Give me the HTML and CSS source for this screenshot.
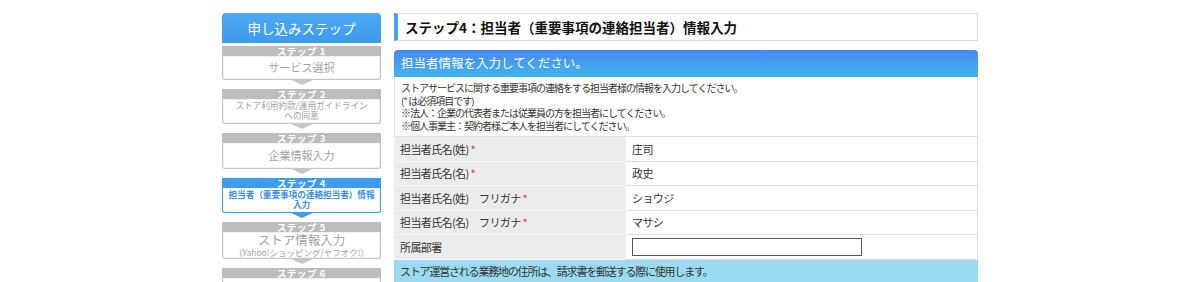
FILE: index.html
```html
<!DOCTYPE html>
<html lang="ja">
<head>
    <meta charset="UTF-8">
    <title>ステップ4：担当者情報入力</title>
    <link rel="stylesheet" href="styles.css">
</head>
<body>
    <div class="wrapper">
        <div class="sidebar">
            <div class="side-head">申し込みステップ</div>
            <div class="step">
                <div class="step-label">ステップ 1</div>
                <div class="step-box s1">サービス選択</div>
            </div>
            <div class="step">
                <div class="step-label">ステップ 2</div>
                <div class="step-box small">ストア利用約款/運用ガイドライン<br>への同意</div>
            </div>
            <div class="step">
                <div class="step-label">ステップ 3</div>
                <div class="step-box s3">企業情報入力</div>
            </div>
            <div class="step current">
                <div class="step-label">ステップ 4</div>
                <div class="step-box small">担当者（重要事項の連絡担当者）情報<br>入力</div>
            </div>
            <div class="step">
                <div class="step-label">ステップ 5</div>
                <div class="step-box two">ストア情報入力<span>（Yahoo!ショッピング/ヤフオク!）</span></div>
            </div>
            <div class="step">
                <div class="step-label">ステップ 6</div>
                <div class="step-box s1">確認</div>
            </div>
        </div>

        <div class="main">
            <h1 class="page-title">ステップ4：担当者（重要事項の連絡担当者）情報入力</h1>

            <div class="panel">
                <div class="panel-head">担当者情報を入力してください。</div>
                <div class="panel-desc">
                    ストアサービスに関する重要事項の連絡をする担当者様の情報を入力してください。<br>
                    (<span class="req">*</span> は必須項目です)<br>
                    ※法人：企業の代表者または従業員の方を担当者にしてください。<br>
                    ※個人事業主：契約者様ご本人を担当者にしてください。
                </div>
                <table class="form-table">
                    <tr>
                        <th>担当者氏名(姓) <span class="req">*</span></th>
                        <td>庄司</td>
                    </tr>
                    <tr>
                        <th>担当者氏名(名) <span class="req">*</span></th>
                        <td>政史</td>
                    </tr>
                    <tr>
                        <th>担当者氏名(姓)　フリガナ <span class="req">*</span></th>
                        <td>ショウジ</td>
                    </tr>
                    <tr>
                        <th>担当者氏名(名)　フリガナ <span class="req">*</span></th>
                        <td>マサシ</td>
                    </tr>
                    <tr>
                        <th>所属部署</th>
                        <td><input type="text" class="text-input"></td>
                    </tr>
                    <tr>
                        <td colspan="2" class="note">ストア運営される業務地の住所は、請求書を郵送する際に使用します。</td>
                    </tr>
                </table>
            </div>
        </div>
    </div>
</body>
</html>
```

FILE: styles.css
```css
body, html {
    margin: 0;
    padding: 0;
    background-color: #fff;
    font-family: 'Noto Sans CJK JP', 'Noto Sans', sans-serif;
    color: #333;
}
.wrapper {
    width: 756px;
    margin: 0 auto;
    padding-top: 13px;
    display: flex;
    gap: 13px;
}

/* sidebar steps */
.sidebar {
    width: 159px;
    flex-shrink: 0;
}
.side-head {
    height: 30px;
    line-height: 30px;
    background: linear-gradient(#4fa8f2, #3d9cec);
    border-radius: 4px 4px 0 0;
    color: #fff;
    font-size: 13.5px;
    text-align: center;
}
.step {
    margin-top: 9px;
}
.side-head + .step {
    margin-top: 3px;
}
.step-label {
    height: 10px;
    line-height: 10px;
    background-color: #bdbdbd;
    color: #fff;
    font-size: 9.5px;
    font-weight: bold;
    text-align: center;
    letter-spacing: 0.5px;
}
.step-box {
    position: relative;
    box-sizing: border-box;
    height: 25px;
    border: 1px solid #c6c6c6;
    border-top: none;
    border-radius: 0 0 3px 3px;
    box-shadow: inset 0 0 0 1px #f2f2f2;
    background-color: #fff;
    color: #a3a3a3;
    font-size: 11px;
    display: flex;
    flex-direction: column;
    align-items: center;
    justify-content: center;
    text-align: center;
    line-height: 11px;
    white-space: nowrap;
}
.step-box.s1 {
    height: 24px;
}
.step-box.s3 {
    height: 26px;
}
.step-box.small {
    font-size: 8.7px;
    line-height: 10px;
    letter-spacing: -0.1px;
}
.step-box.two {
    height: 27px;
    font-size: 12.5px;
    line-height: 14px;
}
.step-box.two span {
    font-size: 8.5px;
    line-height: 10px;
}
.step-box::after {
    content: "";
    position: absolute;
    left: 50%;
    top: 100%;
    margin-left: -13px;
    border-left: 13px solid transparent;
    border-right: 13px solid transparent;
    border-top: 6px solid #c6c6c6;
}
.step:last-child .step-box::after {
    display: none;
}
.current .step-label {
    background-color: #3d9cec;
}
.current .step-box {
    border-color: #3d9cec;
    color: #3a8fe0;
    font-weight: bold;
}
.current .step-box::after {
    border-top-color: #3d9cec;
}

/* main column */
.main {
    flex: 1;
}
.page-title {
    margin: 0;
    height: 26px;
    line-height: 26px;
    border: 1px solid #dcdcdc;
    border-left: 4px solid #4a9ef0;
    padding-left: 7px;
    font-size: 13.5px;
    font-weight: bold;
    color: #111;
}
.panel {
    margin-top: 9px;
}
.panel-head {
    height: 27px;
    line-height: 26px;
    padding-left: 7px;
    background: linear-gradient(#4689f3, #43b5e9);
    border-radius: 4px 4px 0 0;
    color: #fff;
    font-size: 12.5px;
}
.panel-desc {
    border: 1px solid #e0e0e0;
    border-top: none;
    padding: 5px 6px 4px;
    font-size: 10px;
    line-height: 12.5px;
    letter-spacing: -1px;
    color: #333;
}
.req {
    color: #e0303a;
}
.form-table {
    width: 100%;
    border-collapse: collapse;
    font-size: 11px;
    letter-spacing: -0.6px;
}
.form-table th,
.form-table td {
    height: 23.5px;
    border-bottom: 1px solid #dedede;
    padding: 0 6px;
    text-align: left;
    font-weight: normal;
}
.form-table th {
    width: 220px;
    background-color: #ececec;
    border-bottom-color: #f8f8f8;
}
.form-table td {
    border-right: 1px solid #e0e0e0;
}
.text-input {
    display: block;
    width: 228px;
    height: 16px;
    margin: 0;
    border: 1px solid #555;
    padding: 0;
}
.form-table .note {
    background-color: #9bdbf1;
    border: none;
    height: 22px;
    letter-spacing: -1.2px;
}
```
